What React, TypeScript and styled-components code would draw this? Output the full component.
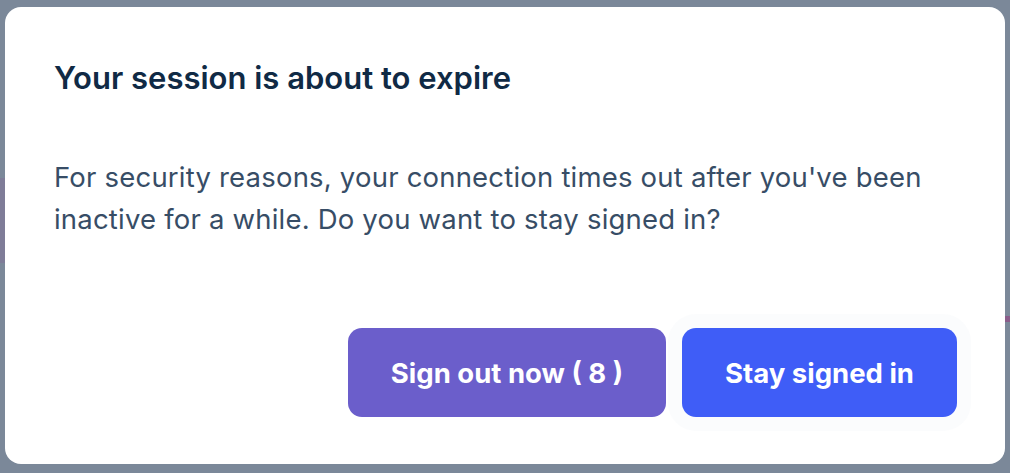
import styled, { createGlobalStyle } from 'styled-components';

const GlobalStyle = createGlobalStyle`
  html, body {
    margin: 0;
    padding: 0;
    height: 100%;
  }
  body {
    background-color: #7b8899;
    background-image:
      linear-gradient(#7f7c98, #7f7c98),
      linear-gradient(#8a5d8a, #8a5d8a);
    background-size: 5px 85px, 5px 6px;
    background-position: 0 178px, 1005px 316px;
    background-repeat: no-repeat;
    font-family: Inter, 'Noto Sans', sans-serif;
  }
  #root {
    height: 100%;
  }
`;

const Overlay = styled.div`
  box-sizing: border-box;
  height: 100%;
  padding: 7px 5px 9px 5px;
`;

const Dialog = styled.div`
  box-sizing: border-box;
  height: 100%;
  background: #ffffff;
  border-radius: 16px;
  padding: 52px 48px 47px 49px;
  display: flex;
  flex-direction: column;
`;

const Title = styled.h2`
  margin: 0;
  font-size: 31px;
  line-height: 38px;
  font-weight: 600;
  color: #102a45;
`;

const Message = styled.p`
  margin: 59px 0 0 0;
  font-size: 27.5px;
  line-height: 42px;
  font-weight: 400;
  letter-spacing: 0.2px;
  color: #374d66;
`;

const Actions = styled.div`
  margin-top: auto;
  display: flex;
  justify-content: flex-end;
  gap: 16px;
`;

const Button = styled.button<{ $variant: 'secondary' | 'primary' }>`
  height: 89px;
  padding: 0 43px;
  border: none;
  border-radius: 14px;
  font-family: Inter, 'Noto Sans', sans-serif;
  font-size: 27.5px;
  font-weight: 700;
  color: #ffffff;
  background: ${(p) => (p.$variant === 'primary' ? '#3f5df7' : '#6b5ecb')};
  box-shadow: ${(p) =>
    p.$variant === 'primary' ? '0 0 0 14px rgba(240, 242, 248, 0.25)' : 'none'};
  cursor: pointer;
`;

export default function App() {
  const seconds = 8;

  return (
    <>
      <GlobalStyle />
      <Overlay>
        <Dialog role="dialog">
          <Title>Your session is about to expire</Title>
          <Message>
            For security reasons, your connection times out after you've been
            <br />
            inactive for a while. Do you want to stay signed in?
          </Message>
          <Actions>
            <Button $variant="secondary">Sign out now ( {seconds} )</Button>
            <Button $variant="primary">Stay signed in</Button>
          </Actions>
        </Dialog>
      </Overlay>
    </>
  );
}
